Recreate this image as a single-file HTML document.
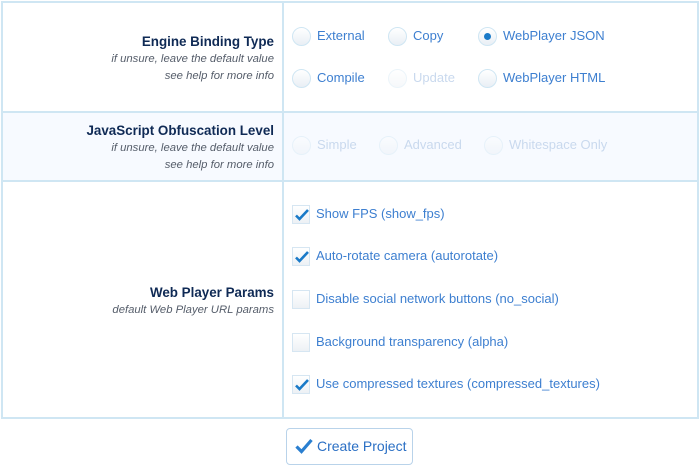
<!DOCTYPE html>
<html><head><meta charset="utf-8"><style>
*{margin:0;padding:0;box-sizing:border-box}
body{width:700px;height:468px;background:#fff;font-family:"Liberation Sans",sans-serif;position:relative;overflow:hidden}
.a{position:absolute}
.hl{position:absolute;left:1px;width:698px;height:2px;background:#cfe6f3}
.vl{position:absolute;width:2px;background:#cfe6f3}
.lab{position:absolute;right:426px;text-align:right;white-space:nowrap}
.t{font-size:13.4px;font-weight:bold;color:#0f2a55;line-height:18px}
.s{font-size:11.3px;font-style:italic;color:#555d6a;line-height:17px}
.r{position:absolute;width:19px;height:19px;border-radius:50%;border:1px solid #cfe6f3;background:linear-gradient(#fff,#e9eff5)}
.r.d{opacity:.4}
.r .dot{position:absolute;left:5px;top:5px;width:7px;height:7px;border-radius:50%;background:#1a7ac8}
.tx{position:absolute;font-size:13px;color:#3d7fd0;line-height:18px;white-space:nowrap}
.tx.d{color:#c9d9ee}
.c{position:absolute;left:292px;width:18px;height:19px;border:1px solid #d6e6f2;background:linear-gradient(#fff,#edf1f5)}
.c svg{position:absolute;left:1px;top:1px}
</style></head><body>
<div class="a" style="left:1px;top:112px;width:698px;height:69px;background:#f7faff"></div>
<div class="hl" style="top:1px"></div>
<div class="hl" style="top:111px"></div>
<div class="hl" style="top:180px"></div>
<div class="hl" style="top:417px"></div>
<div class="vl" style="left:1px;top:1px;height:418px"></div>
<div class="vl" style="left:282px;top:1px;height:418px"></div>
<div class="vl" style="left:697px;top:1px;height:418px"></div>

<div class="lab" style="top:33px"><div class="t">Engine Binding Type</div><div class="s">if unsure, leave the default value</div><div class="s">see help for more info</div></div>
<div class="lab" style="top:122px"><div class="t">JavaScript Obfuscation Level</div><div class="s">if unsure, leave the default value</div><div class="s">see help for more info</div></div>
<div class="lab" style="top:284px"><div class="t">Web Player Params</div><div class="s">default Web Player URL params</div></div>

<div class="r" style="left:292px;top:27px"></div><div class="tx" style="left:317px;top:27px">External</div>
<div class="r" style="left:388px;top:27px"></div><div class="tx" style="left:413px;top:27px">Copy</div>
<div class="r" style="left:478px;top:27px"><div class="dot"></div></div><div class="tx" style="left:503px;top:27px">WebPlayer JSON</div>
<div class="r" style="left:292px;top:69px"></div><div class="tx" style="left:317px;top:69px">Compile</div>
<div class="r d" style="left:388px;top:69px"></div><div class="tx d" style="left:413px;top:69px">Update</div>
<div class="r" style="left:478px;top:69px"></div><div class="tx" style="left:503px;top:69px">WebPlayer HTML</div>

<div class="r d" style="left:292px;top:136px"></div><div class="tx d" style="left:317px;top:136px">Simple</div>
<div class="r d" style="left:379px;top:136px"></div><div class="tx d" style="left:404px;top:136px">Advanced</div>
<div class="r d" style="left:484px;top:136px"></div><div class="tx d" style="left:509px;top:136px">Whitespace Only</div>

<div class="c" style="top:205px"><svg width="16" height="16" viewBox="0 0 16 16"><path d="M2 8.5l3.5 3.5L14 3" fill="none" stroke="#1a7ac8" stroke-width="2.6"/></svg></div>
<div class="tx" style="left:316px;top:205px">Show FPS (show_fps)</div>
<div class="c" style="top:247px"><svg width="16" height="16" viewBox="0 0 16 16"><path d="M2 8.5l3.5 3.5L14 3" fill="none" stroke="#1a7ac8" stroke-width="2.6"/></svg></div>
<div class="tx" style="left:316px;top:247px">Auto-rotate camera (autorotate)</div>
<div class="c" style="top:290px"></div>
<div class="tx" style="left:316px;top:290px">Disable social network buttons (no_social)</div>
<div class="c" style="top:333px"></div>
<div class="tx" style="left:316px;top:333px">Background transparency (alpha)</div>
<div class="c" style="top:375px"><svg width="16" height="16" viewBox="0 0 16 16"><path d="M2 8.5l3.5 3.5L14 3" fill="none" stroke="#1a7ac8" stroke-width="2.6"/></svg></div>
<div class="tx" style="left:316px;top:375px">Use compressed textures (compressed_textures)</div>

<div class="a" style="left:286px;top:428px;width:127px;height:37px;border:1px solid #b9d3ea;border-radius:4px;background:#fff"></div>
<svg class="a" style="left:295px;top:438px" width="18" height="16" viewBox="0 0 18 16"><path d="M1.5 8.5l5 5L16.5 2" fill="none" stroke="#2a7fd0" stroke-width="3.2"/></svg>
<div class="tx" style="left:317px;top:437px;font-size:14px;color:#2a6fc4">Create Project</div>
</body></html>
